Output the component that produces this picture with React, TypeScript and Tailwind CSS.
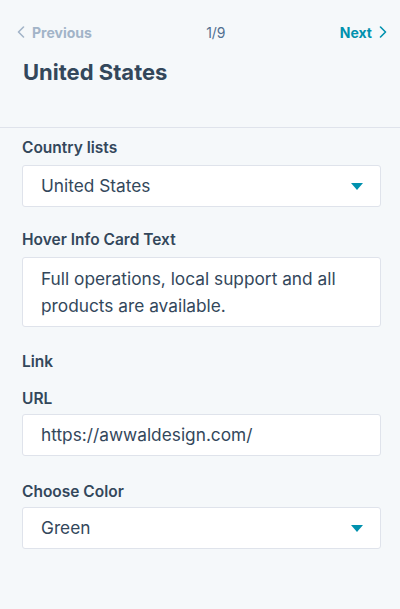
import * as React from 'react';

const FONT = "font-['Inter','Noto_Sans',sans-serif]";

function ChevronLeft(): React.ReactNode {
  return (
    <svg width="8" height="12" viewBox="0 0 8 12" fill="none" className="shrink-0">
      <path d="M6.5 1 L1.5 6 L6.5 11" stroke="currentColor" strokeWidth="1.6" strokeLinecap="round" strokeLinejoin="round"/>
    </svg>
  );
}

function ChevronRight(): React.ReactNode {
  return (
    <svg width="8" height="12" viewBox="0 0 8 12" fill="none" className="shrink-0">
      <path d="M1.5 1 L6.5 6 L1.5 11" stroke="currentColor" strokeWidth="1.6" strokeLinecap="round" strokeLinejoin="round"/>
    </svg>
  );
}

function Caret(): React.ReactNode {
  return (
    <svg width="12" height="7" viewBox="0 0 12 7" className="shrink-0">
      <path d="M0 0 H12 L6 7 Z" fill="#0091ae"/>
    </svg>
  );
}

function Label({ children, gap = 'mb-[7px]' }: { readonly children: React.ReactNode; readonly gap?: string }): React.ReactNode {
  return (
    <div className={ `${ gap } text-[15.5px] leading-5 font-semibold text-[#33475b]` }>{ children }</div>
  );
}

function Select({ value }: { readonly value: string }): React.ReactNode {
  return (
    <div className="flex h-[42px] items-center justify-between rounded-[3px] border border-[#dfe3eb] bg-white pl-[18px] pr-[17px]">
      <span className="text-[17.3px] text-[#33475b]">{ value }</span>
      <Caret/>
    </div>
  );
}

function TextInput({ value }: { readonly value: string }): React.ReactNode {
  return (
    <div className="flex h-[42px] items-center rounded-[3px] border border-[#dfe3eb] bg-white px-[18px]">
      <span className="text-[17.3px] text-[#33475b]">{ value }</span>
    </div>
  );
}

export default function App(): React.ReactNode {
  return (
    <div className={ `${ FONT } min-h-screen w-full bg-[#f5f8fa]` }>
      <div className="border-b border-[#dfe3eb] pb-[41px] pt-[22px]">
        <div className="flex h-5 items-center justify-between pl-[17px] pr-[13px]">
          <div className="flex items-center gap-[7px] text-[#a2b4c8]">
            <ChevronLeft/>
            <span className="text-[14px] font-bold">Previous</span>
          </div>
          <span className="text-[14px] text-[#516f90]">1/9</span>
          <div className="flex items-center gap-[7px] text-[#0091ae]">
            <span className="text-[14px] font-bold">Next</span>
            <ChevronRight/>
          </div>
        </div>
        <h1 className="mt-4 px-[23px] text-[22px] leading-7 font-bold text-[#33475b]">United States</h1>
      </div>

      <div className="pl-[22px] pr-[19px] pt-[10px]">
        <Label>Country lists</Label>
        <Select value="United States"/>

        <div className="mt-[23px]">
          <Label>Hover Info Card Text</Label>
          <div className="rounded-[3px] border border-[#dfe3eb] bg-white px-[18px] py-[7px] text-[17.3px] leading-[27px] text-[#33475b]">
            Full operations, local support and all products are available.
          </div>
        </div>

        <div className="mt-[25px] text-[15.5px] leading-5 font-semibold text-[#33475b]">Link</div>

        <div className="mt-[17px]">
          <Label gap="mb-[5px]">URL</Label>
          <TextInput value="https://awwaldesign.com/"/>
        </div>

        <div className="mt-[26px]">
          <Label gap="mb-[5px]">Choose Color</Label>
          <Select value="Green"/>
        </div>
      </div>
    </div>
  );
}
